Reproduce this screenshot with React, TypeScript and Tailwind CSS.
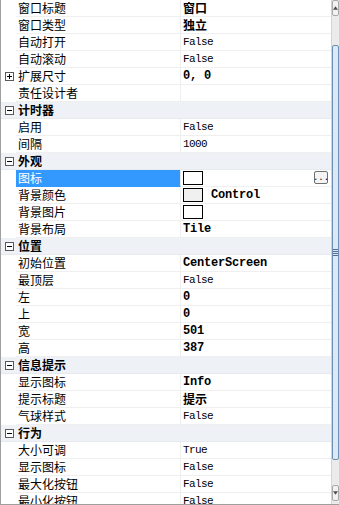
import React from 'react';

type Row =
  | { kind: 'cat'; label: string }
  | {
      kind: 'prop';
      label: string;
      value?: string;
      bold?: boolean;
      expand?: boolean;
      swatch?: string;
      selected?: boolean;
      dots?: boolean;
    };

const rows: Row[] = [
  { kind: 'prop', label: '窗口标题', value: '窗口', bold: true },
  { kind: 'prop', label: '窗口类型', value: '独立', bold: true },
  { kind: 'prop', label: '自动打开', value: 'False' },
  { kind: 'prop', label: '自动滚动', value: 'False' },
  { kind: 'prop', label: '扩展尺寸', value: '0, 0', bold: true, expand: true },
  { kind: 'prop', label: '责任设计者' },
  { kind: 'cat', label: '计时器' },
  { kind: 'prop', label: '启用', value: 'False' },
  { kind: 'prop', label: '间隔', value: '1000' },
  { kind: 'cat', label: '外观' },
  { kind: 'prop', label: '图标', swatch: '#ffffff', selected: true, dots: true },
  { kind: 'prop', label: '背景颜色', swatch: '#f0f0f0', value: 'Control', bold: true },
  { kind: 'prop', label: '背景图片', swatch: '#ffffff' },
  { kind: 'prop', label: '背景布局', value: 'Tile', bold: true },
  { kind: 'cat', label: '位置' },
  { kind: 'prop', label: '初始位置', value: 'CenterScreen', bold: true },
  { kind: 'prop', label: '最顶层', value: 'False' },
  { kind: 'prop', label: '左', value: '0', bold: true },
  { kind: 'prop', label: '上', value: '0', bold: true },
  { kind: 'prop', label: '宽', value: '501', bold: true },
  { kind: 'prop', label: '高', value: '387', bold: true },
  { kind: 'cat', label: '信息提示' },
  { kind: 'prop', label: '显示图标', value: 'Info', bold: true },
  { kind: 'prop', label: '提示标题', value: '提示', bold: true },
  { kind: 'prop', label: '气球样式', value: 'False' },
  { kind: 'cat', label: '行为' },
  { kind: 'prop', label: '大小可调', value: 'True' },
  { kind: 'prop', label: '显示图标', value: 'False' },
  { kind: 'prop', label: '最大化按钮', value: 'False' },
  { kind: 'prop', label: '最小化按钮', value: 'False' },
];

const cjk = "font-['Noto_Sans_CJK_SC',sans-serif]";
const mono = "font-['Liberation_Mono','Noto_Sans_CJK_SC',monospace]";

const ToggleBox = ({ plus }: { plus?: boolean }) => (
  <svg width="9" height="9" viewBox="0 0 9 9" className="block">
    <rect x="0.5" y="0.5" width="8" height="8" fill="#fff" stroke="#5a5a5a" />
    <line x1="2" y1="4.5" x2="7" y2="4.5" stroke="#000" />
    {plus && <line x1="4.5" y1="2" x2="4.5" y2="7" stroke="#000" />}
  </svg>
);

const Value = ({ row }: { row: Extract<Row, { kind: 'prop' }> }) => {
  if (!row.value) return null;
  const isCjk = /[\u4e00-\u9fff]/.test(row.value);
  if (isCjk) {
    return <span className={`${cjk} text-[12px] font-bold text-black`}>{row.value}</span>;
  }
  return (
    <span
      className={`${mono} text-black ${
        row.bold ? 'text-[12px] font-bold tracking-[-0.2px]' : 'text-[11px] tracking-[-0.6px]'
      }`}
    >
      {row.value}
    </span>
  );
};

const Scrollbar = () => (
  <div className="w-[8px] h-full flex flex-col bg-[#ebebeb] border-l border-[#d4d4d4]">
    <div className="h-[16px] bg-[#f2f2f2] border border-[#a9a9a9] rounded-[2px] flex items-center justify-center">
      <svg width="6" height="4" viewBox="0 0 6 4">
        <path d="M0 4 L3 0 L6 4 Z" fill="#4d4d4d" />
      </svg>
    </div>
    <div className="h-[29px]" />
    <div className="h-[415px] bg-[#dce9f5] border border-[#6d8fb5] rounded-[2px] flex items-center justify-center">
      <div className="flex flex-col gap-[1px]">
        <div className="w-[5px] h-[1px] bg-[#4f6f93]" />
        <div className="w-[5px] h-[1px] bg-[#4f6f93]" />
        <div className="w-[5px] h-[1px] bg-[#4f6f93]" />
        <div className="w-[5px] h-[1px] bg-[#4f6f93]" />
      </div>
    </div>
    <div className="flex-1" />
    <div className="h-[16px] bg-[#f2f2f2] border border-[#a9a9a9] rounded-[2px] flex items-center justify-center mb-[3px]">
      <svg width="6" height="4" viewBox="0 0 6 4">
        <path d="M0 0 L3 4 L6 0 Z" fill="#4d4d4d" />
      </svg>
    </div>
  </div>
);

export default function App() {
  return (
    <div className="w-[339px] h-[505px] overflow-hidden bg-white flex border-b border-[#a0a0a0]">
      <div className="w-[331px] h-full overflow-hidden border-l border-[#a0a0a0]">
        {rows.map((row, i) =>
          row.kind === 'cat' ? (
            <div key={i} className="h-[17px] flex items-center bg-[#eef2f7] border-b border-[#e6eaf0]">
              <div className="w-[15px] flex justify-center pl-[1px]">
                <ToggleBox />
              </div>
              <span className={`${cjk} text-[12px] font-bold text-black pl-[2px] leading-none`}>{row.label}</span>
            </div>
          ) : (
            <div key={i} className="h-[17px] flex">
              <div className="w-[15px] flex items-center justify-center pl-[1px] bg-white">
                {row.expand && <ToggleBox plus />}
              </div>
              <div
                className={`w-[165px] flex items-center pl-[2px] border-b border-r ${
                  row.selected ? 'bg-[#3399ff] border-b-[#3399ff] border-r-[#e8e8e8]' : 'bg-white border-[#efefef]'
                }`}
              >
                <span className={`${cjk} text-[12px] leading-none ${row.selected ? 'text-white' : 'text-black'}`}>
                  {row.label}
                </span>
              </div>
              <div className="flex-1 flex items-center pl-[2px] border-b border-[#efefef] relative">
                {row.swatch && (
                  <div
                    className="w-[20px] h-[14px] border border-black mr-[8px] shrink-0"
                    style={{ backgroundColor: row.swatch }}
                  />
                )}
                <Value row={row} />
                {row.dots && (
                  <div className="absolute right-[3px] top-[1px] w-[14px] h-[13px] border border-[#707070] rounded-[2px] bg-[#f4f4f4] flex items-end justify-center">
                    <span className={`${mono} text-[9px] leading-[9px] text-black`}>...</span>
                  </div>
                )}
              </div>
            </div>
          )
        )}
      </div>
      <Scrollbar />
    </div>
  );
}
